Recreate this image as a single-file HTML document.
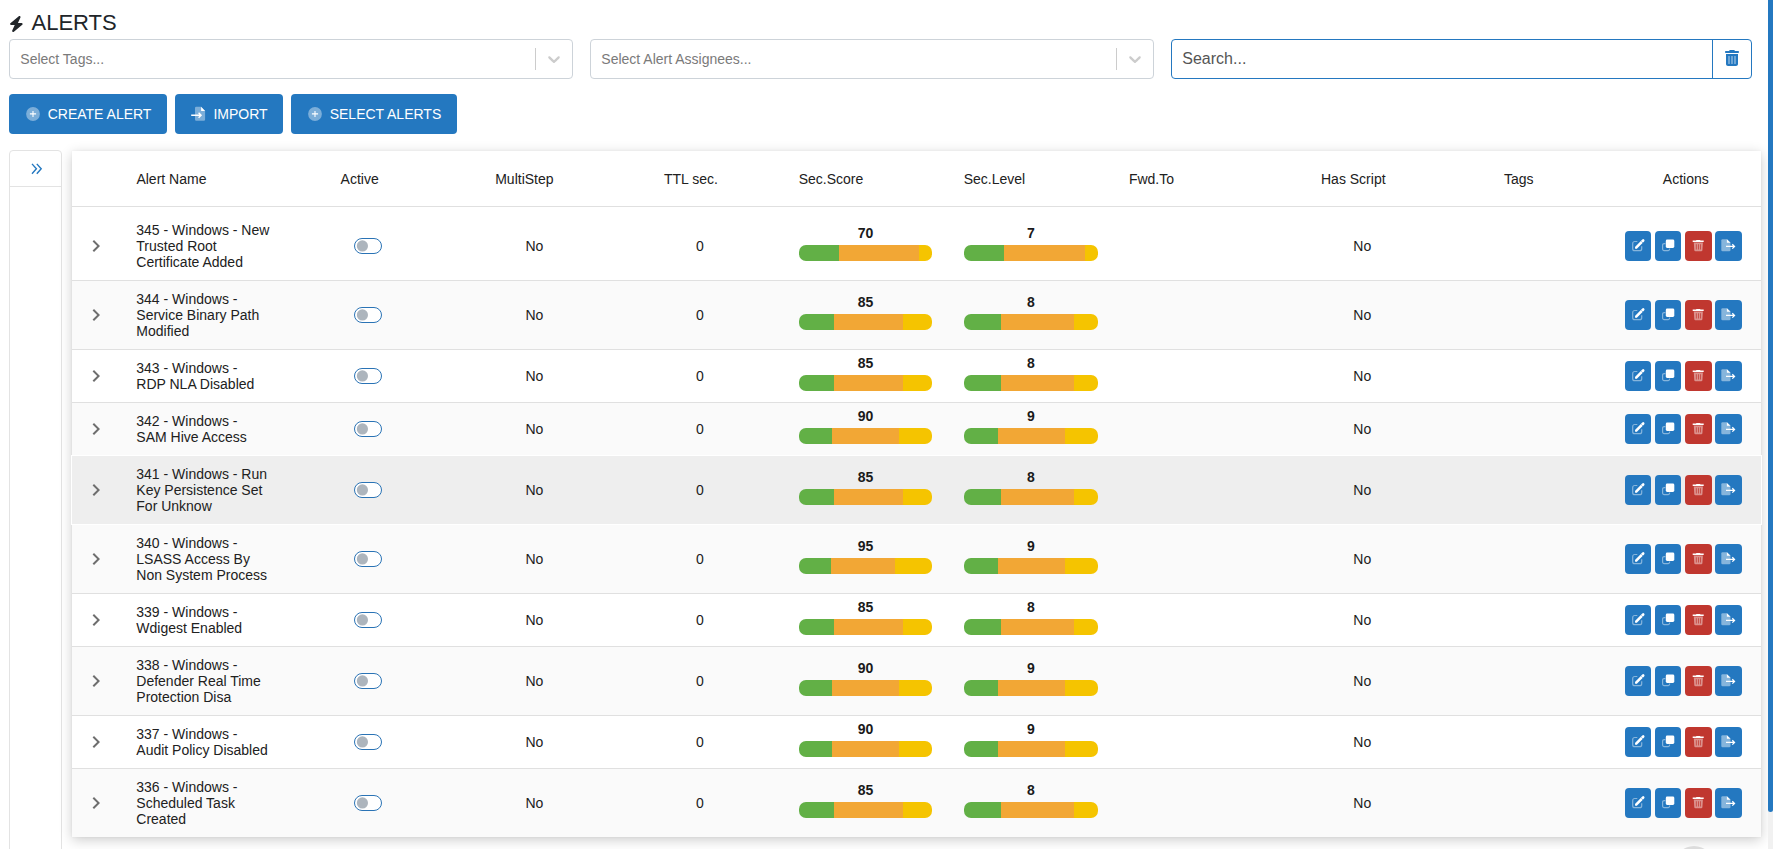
<!DOCTYPE html><html><head><meta charset="utf-8"><title>Alerts</title><style>
*{box-sizing:border-box;margin:0;padding:0}
html,body{width:1773px;height:849px;overflow:hidden;background:#fff}
body{position:relative;font-family:"Liberation Sans",sans-serif;color:#212121}
.a{position:absolute}
.t14{font-size:14px;line-height:16px;white-space:nowrap}
.sel{position:absolute;top:39px;height:40px;border:1px solid #cdd3d9;border-radius:4px;background:#fff}
.ph{position:absolute;font-size:14px;line-height:16px;color:#7a7a7a;white-space:nowrap}
.sep{position:absolute;width:1px;background:#cccccc;top:8px;height:22px}
.btn{position:absolute;top:94px;height:40px;background:#2478c0;border-radius:4px}
.btxt{position:absolute;font-size:14px;line-height:16px;color:#fff;white-space:nowrap}
.row{position:absolute;left:72px;width:1689px}
.bd{position:absolute;left:72px;width:1689px;height:1px;background:#e0e0e0}
.tog{position:absolute;left:354px;width:28px;height:16px;border:1px solid #2a73b5;border-radius:8px;background:#fff}
.tog i{position:absolute;left:1px;top:0.8px;width:12px;height:12px;border-radius:50%;background:#adb5bd}
.num{position:absolute;font-size:14px;line-height:16px;font-weight:bold;text-align:center;color:#1a1a1a}
.bar{position:absolute;height:16px;border-radius:7px;overflow:hidden;display:flex}
.g{background:#62b046} .o{background:#f2a735} .y{background:#f5c400}
.ab{position:absolute;height:30px;border-radius:4px;background:#2478c0}
.ab svg{position:absolute;left:0;top:0}
</style></head><body>
<svg class="a" style="left:9.1px;top:16px" width="14.7" height="16" viewBox="0 0 448 512" preserveAspectRatio="none"><path fill="#212529" d="M349.4 44.6c5.9-13.7 1.5-29.7-10.6-38.5s-28.6-8-39.9 1.8l-256 224c-10 8.8-13.6 22.9-8.9 35.3S50.7 288 64 288H175.5L98.6 467.4c-5.9 13.7-1.5 29.7 10.6 38.5s28.6 8 39.9-1.8l256-224c10-8.8 13.6-22.9 8.9-35.3s-16.6-20.7-30-20.7H272.5L349.4 44.6z"/></svg>
<div class="a" style="left:31.5px;top:11.58px;font-size:22px;line-height:22px;color:#212529">ALERTS</div>
<div class="sel" style="left:9px;width:564px"><div class="ph" style="left:10.3px;top:11.15px">Select Tags...</div><div class="sep" style="left:525px"></div><div class="a" style="left:526px;top:0;width:36px;height:38px"><svg class="a" style="left:8px;top:9px" width="20" height="20" viewBox="0 0 20 20"><path fill="#cccccc" d="M4.516 7.548c0.436-0.446 1.043-0.481 1.576 0l3.908 3.747 3.908-3.747c0.533-0.481 1.141-0.446 1.574 0 0.436 0.445 0.408 1.197 0 1.615-0.406 0.418-4.695 4.502-4.695 4.502-0.217 0.223-0.502 0.335-0.787 0.335s-0.57-0.112-0.789-0.335c0 0-4.287-4.084-4.695-4.502s-0.436-1.17 0-1.615z"/></svg></div></div>
<div class="sel" style="left:590px;width:564px"><div class="ph" style="left:10.3px;top:11.15px">Select Alert Assignees...</div><div class="sep" style="left:525px"></div><div class="a" style="left:526px;top:0;width:36px;height:38px"><svg class="a" style="left:8px;top:9px" width="20" height="20" viewBox="0 0 20 20"><path fill="#cccccc" d="M4.516 7.548c0.436-0.446 1.043-0.481 1.576 0l3.908 3.747 3.908-3.747c0.533-0.481 1.141-0.446 1.574 0 0.436 0.445 0.408 1.197 0 1.615-0.406 0.418-4.695 4.502-4.695 4.502-0.217 0.223-0.502 0.335-0.787 0.335s-0.57-0.112-0.789-0.335c0 0-4.287-4.084-4.695-4.502s-0.436-1.17 0-1.615z"/></svg></div></div>
<div class="sel" style="left:1171px;width:581px;border-color:#2478c0"><div class="a" style="left:10.30px;top:10.06px;font-size:16px;line-height:18px;color:#555">Search...</div><div class="a" style="left:540px;top:0;width:1px;height:38px;background:#2478c0"></div><svg class="a" style="left:553px;top:10px" width="14" height="16" viewBox="0 0 448 512"><path fill-rule="evenodd" fill="#2478c0" d="M135.2 17.7C140.6 6.8 151.7 0 163.8 0H284.2c12.1 0 23.2 6.8 28.6 17.7L320 32h96c17.7 0 32 14.3 32 32s-14.3 32-32 32H32C14.3 96 0 81.7 0 64S14.3 32 32 32h96l7.2-14.3zM32 128H416V448c0 35.3-28.7 64-64 64H96c-35.3 0-64-28.7-64-64V128zm96 64c-6 0-11 5-11 11V437c0 6 5 11 11 11s11-5 11-11V203c0-6-5-11-11-11zm96 0c-6 0-11 5-11 11V437c0 6 5 11 11 11s11-5 11-11V203c0-6-5-11-11-11zm96 0c-6 0-11 5-11 11V437c0 6 5 11 11 11s11-5 11-11V203c0-6-5-11-11-11z"/></svg></div>
<div class="btn" style="left:9px;width:158px"></div>
<svg class="a" style="left:25.6px;top:106.9px" width="14" height="14" viewBox="0 0 14 14"><circle cx="7" cy="7" r="6.9" fill="#fff" opacity="0.4"/><path fill="none" stroke="#fff" stroke-width="1.1" d="M7 3.9V10.1M3.9 6.9H10.1"/></svg>
<div class="btxt" style="left:47.7px;top:105.95px">CREATE ALERT</div>
<div class="btn" style="left:175px;width:108px"></div>
<svg class="a" style="left:180px;top:100px" width="30" height="28" viewBox="180 100 30 28"><path fill="#fff" opacity="0.4" d="M196.3 106.8H201.1L205.1 110.9V119.5A1.3 1.3 0 0 1 203.8 120.8H196.3A1.3 1.3 0 0 1 195 119.5V108.1A1.3 1.3 0 0 1 196.3 106.8Z"/><path fill="#fff" d="M201.1 106.8L205.1 110.9H201.1Z"/><path fill="none" stroke="#fff" stroke-width="1.4" d="M191.2 115.3H201M198.6 112.8L201.1 115.3L198.6 117.8"/></svg>
<div class="btxt" style="left:213.4px;top:105.95px">IMPORT</div>
<div class="btn" style="left:291px;width:166px"></div>
<svg class="a" style="left:307.6px;top:106.9px" width="14" height="14" viewBox="0 0 14 14"><circle cx="7" cy="7" r="6.9" fill="#fff" opacity="0.4"/><path fill="none" stroke="#fff" stroke-width="1.1" d="M7 3.9V10.1M3.9 6.9H10.1"/></svg>
<div class="btxt" style="left:329.7px;top:105.95px">SELECT ALERTS</div>
<div class="a" style="left:9px;top:150px;width:53px;height:720px;border:1px solid #e3e3e3;border-radius:4px;background:#fff"></div>
<div class="a" style="left:10px;top:186px;width:51px;height:1px;background:#e3e3e3"></div>
<svg class="a" style="left:30px;top:162px" width="14" height="14" viewBox="0 0 14 14"><path d="M2 1.9 L6.4 6.8 L2 11.7 M6.8 1.9 L11.2 6.8 L6.8 11.7" fill="none" stroke="#2478c0" stroke-width="1.4"/></svg>
<div class="a" style="left:72px;top:151px;width:1689px;height:686px;background:#fff;box-shadow:0 3px 12px rgba(0,0,0,0.2),0 0 2px rgba(0,0,0,0.06)"></div>
<div class="a t14" style="left:136.4px;top:171.15px">Alert Name</div>
<div class="a t14" style="left:340.6px;top:171.15px">Active</div>
<div class="a t14" style="left:495.2px;top:171.15px">MultiStep</div>
<div class="a t14" style="left:664px;top:171.15px">TTL sec.</div>
<div class="a t14" style="left:798.7px;top:171.15px">Sec.Score</div>
<div class="a t14" style="left:963.7px;top:171.15px">Sec.Level</div>
<div class="a t14" style="left:1128.9px;top:171.15px">Fwd.To</div>
<div class="a t14" style="left:1321.0px;top:171.15px">Has Script</div>
<div class="a t14" style="left:1504px;top:171.15px">Tags</div>
<div class="a t14" style="left:1662.8px;top:171.15px">Actions</div>
<div class="bd" style="top:206px"></div>
<div class="row" style="top:207px;height:73px;background:#ffffff"></div>
<svg class="a" style="left:84.3px;top:233.70px" width="24" height="24" viewBox="0 0 24 24"><path fill="#6e6e6e" d="M8.59 16.59 13.17 12 8.59 7.41 10 6l6 6-6 6z"/></svg>
<div class="a t14" style="left:136.3px;top:222.00px">345 - Windows - New<br>Trusted Root<br>Certificate Added</div>
<svg class="a" style="left:354px;top:238.00px" width="28" height="16" viewBox="0 0 28 16"><rect x="0.5" y="0.5" width="27" height="15" rx="7.5" fill="#fff" stroke="#2a73b5" stroke-width="1"/><circle cx="8.4" cy="7.95" r="5.6" fill="#adb5bd"/></svg>
<div class="a t14" style="left:525.4px;top:238.00px">No</div>
<div class="a t14" style="left:695.9px;top:238.00px">0</div>
<div class="a t14" style="left:1353.3px;top:238.00px">No</div>
<div class="num" style="left:799px;width:133px;top:224.50px">70</div>
<div class="bar" style="left:799px;width:133px;top:245.00px"><div class="g" style="flex:30"></div><div class="o" style="flex:60"></div><div class="y" style="flex:10"></div></div>
<div class="num" style="left:964px;width:134px;top:224.50px">7</div>
<div class="bar" style="left:964px;width:134px;top:245.00px"><div class="g" style="flex:3"></div><div class="o" style="flex:6"></div><div class="y" style="flex:1"></div></div>
<div class="ab" style="left:1625px;width:26px;top:231.00px"><svg width="26" height="30" viewBox="0 0 26 30"><path d="M12.3 10.5 H9.7 A2 2 0 0 0 7.7 12.5 V17.7 A2 2 0 0 0 9.7 19.7 H14.7 A2 2 0 0 0 16.7 17.7 V15.3" fill="none" stroke="#fff" stroke-opacity="0.45" stroke-width="1.2"/><path d="M11.4 16.3 L18.2 9.5" stroke="#fff" stroke-width="2.6" stroke-linecap="round"/><path d="M10.5 15.4 L12.3 17.2 L10 17.7 Z" fill="#fff"/><path d="M16.3 10.3 L18.3 12.3" stroke="#2478c0" stroke-width="0.5"/></svg></div>
<div class="ab" style="left:1655px;width:26px;top:231.00px"><svg width="26" height="30" viewBox="0 0 26 30"><path d="M10.4 12.6 H9.1 A1.5 1.5 0 0 0 7.6 14.1 V18.1 A1.5 1.5 0 0 0 9.1 19.6 H13.1 A1.5 1.5 0 0 0 14.6 18.1 V17.4" fill="none" stroke="#fff" stroke-opacity="0.45" stroke-width="1.2"/><rect x="10.8" y="8.5" width="8.5" height="8.4" rx="1.4" fill="#fff"/></svg></div>
<div class="ab" style="left:1685px;width:27px;top:231.00px;background:#c0372f"><svg width="27" height="30" viewBox="0 0 27 30"><path d="M7.7 9.6 H10.9 L11.5 9 H15 L15.6 9.6 H18.7 V11.1 H7.7 Z" fill="#fff"/><path fill-rule="evenodd" d="M8.8 11.6 H17.9 L17.4 19.2 A1.2 1.2 0 0 1 16.2 20.3 H10.5 A1.2 1.2 0 0 1 9.3 19.2 Z M10.9 13.2 V18.6 H11.6 V13.2 Z M13 13.2 V18.6 H13.7 V13.2 Z M15.1 13.2 V18.6 H15.8 V13.2 Z" fill="#fff" fill-opacity="0.45"/></svg></div>
<div class="ab" style="left:1715px;width:27px;top:231.00px"><svg width="27" height="30" viewBox="0 0 27 30"><path d="M7.6 8.2 H11.9 L15.5 11.8 V19 A1.3 1.3 0 0 1 14.2 20.3 H7.6 A1.3 1.3 0 0 1 6.3 19 V9.5 A1.3 1.3 0 0 1 7.6 8.2 Z" fill="#fff" fill-opacity="0.45"/><path d="M11.9 8.2 L15.5 11.8 H11.9 Z" fill="#fff"/><path d="M11 15.45 H19.3 M17.3 13.3 L19.5 15.45 L17.3 17.6" fill="none" stroke="#fff" stroke-width="1.3"/></svg></div>
<div class="row" style="top:281px;height:68px;background:#fafafa"></div>
<svg class="a" style="left:84.3px;top:302.70px" width="24" height="24" viewBox="0 0 24 24"><path fill="#6e6e6e" d="M8.59 16.59 13.17 12 8.59 7.41 10 6l6 6-6 6z"/></svg>
<div class="a t14" style="left:136.3px;top:291.00px">344 - Windows -<br>Service Binary Path<br>Modified</div>
<svg class="a" style="left:354px;top:307.00px" width="28" height="16" viewBox="0 0 28 16"><rect x="0.5" y="0.5" width="27" height="15" rx="7.5" fill="#fff" stroke="#2a73b5" stroke-width="1"/><circle cx="8.4" cy="7.95" r="5.6" fill="#adb5bd"/></svg>
<div class="a t14" style="left:525.4px;top:307.00px">No</div>
<div class="a t14" style="left:695.9px;top:307.00px">0</div>
<div class="a t14" style="left:1353.3px;top:307.00px">No</div>
<div class="num" style="left:799px;width:133px;top:293.50px">85</div>
<div class="bar" style="left:799px;width:133px;top:314.00px"><div class="g" style="flex:30"></div><div class="o" style="flex:60"></div><div class="y" style="flex:25"></div></div>
<div class="num" style="left:964px;width:134px;top:293.50px">8</div>
<div class="bar" style="left:964px;width:134px;top:314.00px"><div class="g" style="flex:3"></div><div class="o" style="flex:6"></div><div class="y" style="flex:2"></div></div>
<div class="ab" style="left:1625px;width:26px;top:300.00px"><svg width="26" height="30" viewBox="0 0 26 30"><path d="M12.3 10.5 H9.7 A2 2 0 0 0 7.7 12.5 V17.7 A2 2 0 0 0 9.7 19.7 H14.7 A2 2 0 0 0 16.7 17.7 V15.3" fill="none" stroke="#fff" stroke-opacity="0.45" stroke-width="1.2"/><path d="M11.4 16.3 L18.2 9.5" stroke="#fff" stroke-width="2.6" stroke-linecap="round"/><path d="M10.5 15.4 L12.3 17.2 L10 17.7 Z" fill="#fff"/><path d="M16.3 10.3 L18.3 12.3" stroke="#2478c0" stroke-width="0.5"/></svg></div>
<div class="ab" style="left:1655px;width:26px;top:300.00px"><svg width="26" height="30" viewBox="0 0 26 30"><path d="M10.4 12.6 H9.1 A1.5 1.5 0 0 0 7.6 14.1 V18.1 A1.5 1.5 0 0 0 9.1 19.6 H13.1 A1.5 1.5 0 0 0 14.6 18.1 V17.4" fill="none" stroke="#fff" stroke-opacity="0.45" stroke-width="1.2"/><rect x="10.8" y="8.5" width="8.5" height="8.4" rx="1.4" fill="#fff"/></svg></div>
<div class="ab" style="left:1685px;width:27px;top:300.00px;background:#c0372f"><svg width="27" height="30" viewBox="0 0 27 30"><path d="M7.7 9.6 H10.9 L11.5 9 H15 L15.6 9.6 H18.7 V11.1 H7.7 Z" fill="#fff"/><path fill-rule="evenodd" d="M8.8 11.6 H17.9 L17.4 19.2 A1.2 1.2 0 0 1 16.2 20.3 H10.5 A1.2 1.2 0 0 1 9.3 19.2 Z M10.9 13.2 V18.6 H11.6 V13.2 Z M13 13.2 V18.6 H13.7 V13.2 Z M15.1 13.2 V18.6 H15.8 V13.2 Z" fill="#fff" fill-opacity="0.45"/></svg></div>
<div class="ab" style="left:1715px;width:27px;top:300.00px"><svg width="27" height="30" viewBox="0 0 27 30"><path d="M7.6 8.2 H11.9 L15.5 11.8 V19 A1.3 1.3 0 0 1 14.2 20.3 H7.6 A1.3 1.3 0 0 1 6.3 19 V9.5 A1.3 1.3 0 0 1 7.6 8.2 Z" fill="#fff" fill-opacity="0.45"/><path d="M11.9 8.2 L15.5 11.8 H11.9 Z" fill="#fff"/><path d="M11 15.45 H19.3 M17.3 13.3 L19.5 15.45 L17.3 17.6" fill="none" stroke="#fff" stroke-width="1.3"/></svg></div>
<div class="row" style="top:350px;height:52px;background:#ffffff"></div>
<svg class="a" style="left:84.3px;top:363.70px" width="24" height="24" viewBox="0 0 24 24"><path fill="#6e6e6e" d="M8.59 16.59 13.17 12 8.59 7.41 10 6l6 6-6 6z"/></svg>
<div class="a t14" style="left:136.3px;top:360.00px">343 - Windows -<br>RDP NLA Disabled</div>
<svg class="a" style="left:354px;top:368.00px" width="28" height="16" viewBox="0 0 28 16"><rect x="0.5" y="0.5" width="27" height="15" rx="7.5" fill="#fff" stroke="#2a73b5" stroke-width="1"/><circle cx="8.4" cy="7.95" r="5.6" fill="#adb5bd"/></svg>
<div class="a t14" style="left:525.4px;top:368.00px">No</div>
<div class="a t14" style="left:695.9px;top:368.00px">0</div>
<div class="a t14" style="left:1353.3px;top:368.00px">No</div>
<div class="num" style="left:799px;width:133px;top:354.50px">85</div>
<div class="bar" style="left:799px;width:133px;top:375.00px"><div class="g" style="flex:30"></div><div class="o" style="flex:60"></div><div class="y" style="flex:25"></div></div>
<div class="num" style="left:964px;width:134px;top:354.50px">8</div>
<div class="bar" style="left:964px;width:134px;top:375.00px"><div class="g" style="flex:3"></div><div class="o" style="flex:6"></div><div class="y" style="flex:2"></div></div>
<div class="ab" style="left:1625px;width:26px;top:361.00px"><svg width="26" height="30" viewBox="0 0 26 30"><path d="M12.3 10.5 H9.7 A2 2 0 0 0 7.7 12.5 V17.7 A2 2 0 0 0 9.7 19.7 H14.7 A2 2 0 0 0 16.7 17.7 V15.3" fill="none" stroke="#fff" stroke-opacity="0.45" stroke-width="1.2"/><path d="M11.4 16.3 L18.2 9.5" stroke="#fff" stroke-width="2.6" stroke-linecap="round"/><path d="M10.5 15.4 L12.3 17.2 L10 17.7 Z" fill="#fff"/><path d="M16.3 10.3 L18.3 12.3" stroke="#2478c0" stroke-width="0.5"/></svg></div>
<div class="ab" style="left:1655px;width:26px;top:361.00px"><svg width="26" height="30" viewBox="0 0 26 30"><path d="M10.4 12.6 H9.1 A1.5 1.5 0 0 0 7.6 14.1 V18.1 A1.5 1.5 0 0 0 9.1 19.6 H13.1 A1.5 1.5 0 0 0 14.6 18.1 V17.4" fill="none" stroke="#fff" stroke-opacity="0.45" stroke-width="1.2"/><rect x="10.8" y="8.5" width="8.5" height="8.4" rx="1.4" fill="#fff"/></svg></div>
<div class="ab" style="left:1685px;width:27px;top:361.00px;background:#c0372f"><svg width="27" height="30" viewBox="0 0 27 30"><path d="M7.7 9.6 H10.9 L11.5 9 H15 L15.6 9.6 H18.7 V11.1 H7.7 Z" fill="#fff"/><path fill-rule="evenodd" d="M8.8 11.6 H17.9 L17.4 19.2 A1.2 1.2 0 0 1 16.2 20.3 H10.5 A1.2 1.2 0 0 1 9.3 19.2 Z M10.9 13.2 V18.6 H11.6 V13.2 Z M13 13.2 V18.6 H13.7 V13.2 Z M15.1 13.2 V18.6 H15.8 V13.2 Z" fill="#fff" fill-opacity="0.45"/></svg></div>
<div class="ab" style="left:1715px;width:27px;top:361.00px"><svg width="27" height="30" viewBox="0 0 27 30"><path d="M7.6 8.2 H11.9 L15.5 11.8 V19 A1.3 1.3 0 0 1 14.2 20.3 H7.6 A1.3 1.3 0 0 1 6.3 19 V9.5 A1.3 1.3 0 0 1 7.6 8.2 Z" fill="#fff" fill-opacity="0.45"/><path d="M11.9 8.2 L15.5 11.8 H11.9 Z" fill="#fff"/><path d="M11 15.45 H19.3 M17.3 13.3 L19.5 15.45 L17.3 17.6" fill="none" stroke="#fff" stroke-width="1.3"/></svg></div>
<div class="row" style="top:403px;height:52px;background:#fafafa"></div>
<svg class="a" style="left:84.3px;top:416.70px" width="24" height="24" viewBox="0 0 24 24"><path fill="#6e6e6e" d="M8.59 16.59 13.17 12 8.59 7.41 10 6l6 6-6 6z"/></svg>
<div class="a t14" style="left:136.3px;top:413.00px">342 - Windows -<br>SAM Hive Access</div>
<svg class="a" style="left:354px;top:421.00px" width="28" height="16" viewBox="0 0 28 16"><rect x="0.5" y="0.5" width="27" height="15" rx="7.5" fill="#fff" stroke="#2a73b5" stroke-width="1"/><circle cx="8.4" cy="7.95" r="5.6" fill="#adb5bd"/></svg>
<div class="a t14" style="left:525.4px;top:421.00px">No</div>
<div class="a t14" style="left:695.9px;top:421.00px">0</div>
<div class="a t14" style="left:1353.3px;top:421.00px">No</div>
<div class="num" style="left:799px;width:133px;top:407.50px">90</div>
<div class="bar" style="left:799px;width:133px;top:428.00px"><div class="g" style="flex:30"></div><div class="o" style="flex:60"></div><div class="y" style="flex:30"></div></div>
<div class="num" style="left:964px;width:134px;top:407.50px">9</div>
<div class="bar" style="left:964px;width:134px;top:428.00px"><div class="g" style="flex:3"></div><div class="o" style="flex:6"></div><div class="y" style="flex:3"></div></div>
<div class="ab" style="left:1625px;width:26px;top:414.00px"><svg width="26" height="30" viewBox="0 0 26 30"><path d="M12.3 10.5 H9.7 A2 2 0 0 0 7.7 12.5 V17.7 A2 2 0 0 0 9.7 19.7 H14.7 A2 2 0 0 0 16.7 17.7 V15.3" fill="none" stroke="#fff" stroke-opacity="0.45" stroke-width="1.2"/><path d="M11.4 16.3 L18.2 9.5" stroke="#fff" stroke-width="2.6" stroke-linecap="round"/><path d="M10.5 15.4 L12.3 17.2 L10 17.7 Z" fill="#fff"/><path d="M16.3 10.3 L18.3 12.3" stroke="#2478c0" stroke-width="0.5"/></svg></div>
<div class="ab" style="left:1655px;width:26px;top:414.00px"><svg width="26" height="30" viewBox="0 0 26 30"><path d="M10.4 12.6 H9.1 A1.5 1.5 0 0 0 7.6 14.1 V18.1 A1.5 1.5 0 0 0 9.1 19.6 H13.1 A1.5 1.5 0 0 0 14.6 18.1 V17.4" fill="none" stroke="#fff" stroke-opacity="0.45" stroke-width="1.2"/><rect x="10.8" y="8.5" width="8.5" height="8.4" rx="1.4" fill="#fff"/></svg></div>
<div class="ab" style="left:1685px;width:27px;top:414.00px;background:#c0372f"><svg width="27" height="30" viewBox="0 0 27 30"><path d="M7.7 9.6 H10.9 L11.5 9 H15 L15.6 9.6 H18.7 V11.1 H7.7 Z" fill="#fff"/><path fill-rule="evenodd" d="M8.8 11.6 H17.9 L17.4 19.2 A1.2 1.2 0 0 1 16.2 20.3 H10.5 A1.2 1.2 0 0 1 9.3 19.2 Z M10.9 13.2 V18.6 H11.6 V13.2 Z M13 13.2 V18.6 H13.7 V13.2 Z M15.1 13.2 V18.6 H15.8 V13.2 Z" fill="#fff" fill-opacity="0.45"/></svg></div>
<div class="ab" style="left:1715px;width:27px;top:414.00px"><svg width="27" height="30" viewBox="0 0 27 30"><path d="M7.6 8.2 H11.9 L15.5 11.8 V19 A1.3 1.3 0 0 1 14.2 20.3 H7.6 A1.3 1.3 0 0 1 6.3 19 V9.5 A1.3 1.3 0 0 1 7.6 8.2 Z" fill="#fff" fill-opacity="0.45"/><path d="M11.9 8.2 L15.5 11.8 H11.9 Z" fill="#fff"/><path d="M11 15.45 H19.3 M17.3 13.3 L19.5 15.45 L17.3 17.6" fill="none" stroke="#fff" stroke-width="1.3"/></svg></div>
<div class="a" style="left:71px;top:455px;width:1691px;height:70px;background:#fff"></div>
<div class="row" style="top:456px;height:68px;background:#eeeeee"></div>
<svg class="a" style="left:84.3px;top:477.70px" width="24" height="24" viewBox="0 0 24 24"><path fill="#6e6e6e" d="M8.59 16.59 13.17 12 8.59 7.41 10 6l6 6-6 6z"/></svg>
<div class="a t14" style="left:136.3px;top:466.00px">341 - Windows - Run<br>Key Persistence Set<br>For Unknow</div>
<svg class="a" style="left:354px;top:482.00px" width="28" height="16" viewBox="0 0 28 16"><rect x="0.5" y="0.5" width="27" height="15" rx="7.5" fill="#fff" stroke="#2a73b5" stroke-width="1"/><circle cx="8.4" cy="7.95" r="5.6" fill="#adb5bd"/></svg>
<div class="a t14" style="left:525.4px;top:482.00px">No</div>
<div class="a t14" style="left:695.9px;top:482.00px">0</div>
<div class="a t14" style="left:1353.3px;top:482.00px">No</div>
<div class="num" style="left:799px;width:133px;top:468.50px">85</div>
<div class="bar" style="left:799px;width:133px;top:489.00px"><div class="g" style="flex:30"></div><div class="o" style="flex:60"></div><div class="y" style="flex:25"></div></div>
<div class="num" style="left:964px;width:134px;top:468.50px">8</div>
<div class="bar" style="left:964px;width:134px;top:489.00px"><div class="g" style="flex:3"></div><div class="o" style="flex:6"></div><div class="y" style="flex:2"></div></div>
<div class="ab" style="left:1625px;width:26px;top:475.00px"><svg width="26" height="30" viewBox="0 0 26 30"><path d="M12.3 10.5 H9.7 A2 2 0 0 0 7.7 12.5 V17.7 A2 2 0 0 0 9.7 19.7 H14.7 A2 2 0 0 0 16.7 17.7 V15.3" fill="none" stroke="#fff" stroke-opacity="0.45" stroke-width="1.2"/><path d="M11.4 16.3 L18.2 9.5" stroke="#fff" stroke-width="2.6" stroke-linecap="round"/><path d="M10.5 15.4 L12.3 17.2 L10 17.7 Z" fill="#fff"/><path d="M16.3 10.3 L18.3 12.3" stroke="#2478c0" stroke-width="0.5"/></svg></div>
<div class="ab" style="left:1655px;width:26px;top:475.00px"><svg width="26" height="30" viewBox="0 0 26 30"><path d="M10.4 12.6 H9.1 A1.5 1.5 0 0 0 7.6 14.1 V18.1 A1.5 1.5 0 0 0 9.1 19.6 H13.1 A1.5 1.5 0 0 0 14.6 18.1 V17.4" fill="none" stroke="#fff" stroke-opacity="0.45" stroke-width="1.2"/><rect x="10.8" y="8.5" width="8.5" height="8.4" rx="1.4" fill="#fff"/></svg></div>
<div class="ab" style="left:1685px;width:27px;top:475.00px;background:#c0372f"><svg width="27" height="30" viewBox="0 0 27 30"><path d="M7.7 9.6 H10.9 L11.5 9 H15 L15.6 9.6 H18.7 V11.1 H7.7 Z" fill="#fff"/><path fill-rule="evenodd" d="M8.8 11.6 H17.9 L17.4 19.2 A1.2 1.2 0 0 1 16.2 20.3 H10.5 A1.2 1.2 0 0 1 9.3 19.2 Z M10.9 13.2 V18.6 H11.6 V13.2 Z M13 13.2 V18.6 H13.7 V13.2 Z M15.1 13.2 V18.6 H15.8 V13.2 Z" fill="#fff" fill-opacity="0.45"/></svg></div>
<div class="ab" style="left:1715px;width:27px;top:475.00px"><svg width="27" height="30" viewBox="0 0 27 30"><path d="M7.6 8.2 H11.9 L15.5 11.8 V19 A1.3 1.3 0 0 1 14.2 20.3 H7.6 A1.3 1.3 0 0 1 6.3 19 V9.5 A1.3 1.3 0 0 1 7.6 8.2 Z" fill="#fff" fill-opacity="0.45"/><path d="M11.9 8.2 L15.5 11.8 H11.9 Z" fill="#fff"/><path d="M11 15.45 H19.3 M17.3 13.3 L19.5 15.45 L17.3 17.6" fill="none" stroke="#fff" stroke-width="1.3"/></svg></div>
<div class="row" style="top:525px;height:68px;background:#fafafa"></div>
<svg class="a" style="left:84.3px;top:546.70px" width="24" height="24" viewBox="0 0 24 24"><path fill="#6e6e6e" d="M8.59 16.59 13.17 12 8.59 7.41 10 6l6 6-6 6z"/></svg>
<div class="a t14" style="left:136.3px;top:535.00px">340 - Windows -<br>LSASS Access By<br>Non System Process</div>
<svg class="a" style="left:354px;top:551.00px" width="28" height="16" viewBox="0 0 28 16"><rect x="0.5" y="0.5" width="27" height="15" rx="7.5" fill="#fff" stroke="#2a73b5" stroke-width="1"/><circle cx="8.4" cy="7.95" r="5.6" fill="#adb5bd"/></svg>
<div class="a t14" style="left:525.4px;top:551.00px">No</div>
<div class="a t14" style="left:695.9px;top:551.00px">0</div>
<div class="a t14" style="left:1353.3px;top:551.00px">No</div>
<div class="num" style="left:799px;width:133px;top:537.50px">95</div>
<div class="bar" style="left:799px;width:133px;top:558.00px"><div class="g" style="flex:30"></div><div class="o" style="flex:60"></div><div class="y" style="flex:35"></div></div>
<div class="num" style="left:964px;width:134px;top:537.50px">9</div>
<div class="bar" style="left:964px;width:134px;top:558.00px"><div class="g" style="flex:3"></div><div class="o" style="flex:6"></div><div class="y" style="flex:3"></div></div>
<div class="ab" style="left:1625px;width:26px;top:544.00px"><svg width="26" height="30" viewBox="0 0 26 30"><path d="M12.3 10.5 H9.7 A2 2 0 0 0 7.7 12.5 V17.7 A2 2 0 0 0 9.7 19.7 H14.7 A2 2 0 0 0 16.7 17.7 V15.3" fill="none" stroke="#fff" stroke-opacity="0.45" stroke-width="1.2"/><path d="M11.4 16.3 L18.2 9.5" stroke="#fff" stroke-width="2.6" stroke-linecap="round"/><path d="M10.5 15.4 L12.3 17.2 L10 17.7 Z" fill="#fff"/><path d="M16.3 10.3 L18.3 12.3" stroke="#2478c0" stroke-width="0.5"/></svg></div>
<div class="ab" style="left:1655px;width:26px;top:544.00px"><svg width="26" height="30" viewBox="0 0 26 30"><path d="M10.4 12.6 H9.1 A1.5 1.5 0 0 0 7.6 14.1 V18.1 A1.5 1.5 0 0 0 9.1 19.6 H13.1 A1.5 1.5 0 0 0 14.6 18.1 V17.4" fill="none" stroke="#fff" stroke-opacity="0.45" stroke-width="1.2"/><rect x="10.8" y="8.5" width="8.5" height="8.4" rx="1.4" fill="#fff"/></svg></div>
<div class="ab" style="left:1685px;width:27px;top:544.00px;background:#c0372f"><svg width="27" height="30" viewBox="0 0 27 30"><path d="M7.7 9.6 H10.9 L11.5 9 H15 L15.6 9.6 H18.7 V11.1 H7.7 Z" fill="#fff"/><path fill-rule="evenodd" d="M8.8 11.6 H17.9 L17.4 19.2 A1.2 1.2 0 0 1 16.2 20.3 H10.5 A1.2 1.2 0 0 1 9.3 19.2 Z M10.9 13.2 V18.6 H11.6 V13.2 Z M13 13.2 V18.6 H13.7 V13.2 Z M15.1 13.2 V18.6 H15.8 V13.2 Z" fill="#fff" fill-opacity="0.45"/></svg></div>
<div class="ab" style="left:1715px;width:27px;top:544.00px"><svg width="27" height="30" viewBox="0 0 27 30"><path d="M7.6 8.2 H11.9 L15.5 11.8 V19 A1.3 1.3 0 0 1 14.2 20.3 H7.6 A1.3 1.3 0 0 1 6.3 19 V9.5 A1.3 1.3 0 0 1 7.6 8.2 Z" fill="#fff" fill-opacity="0.45"/><path d="M11.9 8.2 L15.5 11.8 H11.9 Z" fill="#fff"/><path d="M11 15.45 H19.3 M17.3 13.3 L19.5 15.45 L17.3 17.6" fill="none" stroke="#fff" stroke-width="1.3"/></svg></div>
<div class="row" style="top:594px;height:52px;background:#ffffff"></div>
<svg class="a" style="left:84.3px;top:607.70px" width="24" height="24" viewBox="0 0 24 24"><path fill="#6e6e6e" d="M8.59 16.59 13.17 12 8.59 7.41 10 6l6 6-6 6z"/></svg>
<div class="a t14" style="left:136.3px;top:604.00px">339 - Windows -<br>Wdigest Enabled</div>
<svg class="a" style="left:354px;top:612.00px" width="28" height="16" viewBox="0 0 28 16"><rect x="0.5" y="0.5" width="27" height="15" rx="7.5" fill="#fff" stroke="#2a73b5" stroke-width="1"/><circle cx="8.4" cy="7.95" r="5.6" fill="#adb5bd"/></svg>
<div class="a t14" style="left:525.4px;top:612.00px">No</div>
<div class="a t14" style="left:695.9px;top:612.00px">0</div>
<div class="a t14" style="left:1353.3px;top:612.00px">No</div>
<div class="num" style="left:799px;width:133px;top:598.50px">85</div>
<div class="bar" style="left:799px;width:133px;top:619.00px"><div class="g" style="flex:30"></div><div class="o" style="flex:60"></div><div class="y" style="flex:25"></div></div>
<div class="num" style="left:964px;width:134px;top:598.50px">8</div>
<div class="bar" style="left:964px;width:134px;top:619.00px"><div class="g" style="flex:3"></div><div class="o" style="flex:6"></div><div class="y" style="flex:2"></div></div>
<div class="ab" style="left:1625px;width:26px;top:605.00px"><svg width="26" height="30" viewBox="0 0 26 30"><path d="M12.3 10.5 H9.7 A2 2 0 0 0 7.7 12.5 V17.7 A2 2 0 0 0 9.7 19.7 H14.7 A2 2 0 0 0 16.7 17.7 V15.3" fill="none" stroke="#fff" stroke-opacity="0.45" stroke-width="1.2"/><path d="M11.4 16.3 L18.2 9.5" stroke="#fff" stroke-width="2.6" stroke-linecap="round"/><path d="M10.5 15.4 L12.3 17.2 L10 17.7 Z" fill="#fff"/><path d="M16.3 10.3 L18.3 12.3" stroke="#2478c0" stroke-width="0.5"/></svg></div>
<div class="ab" style="left:1655px;width:26px;top:605.00px"><svg width="26" height="30" viewBox="0 0 26 30"><path d="M10.4 12.6 H9.1 A1.5 1.5 0 0 0 7.6 14.1 V18.1 A1.5 1.5 0 0 0 9.1 19.6 H13.1 A1.5 1.5 0 0 0 14.6 18.1 V17.4" fill="none" stroke="#fff" stroke-opacity="0.45" stroke-width="1.2"/><rect x="10.8" y="8.5" width="8.5" height="8.4" rx="1.4" fill="#fff"/></svg></div>
<div class="ab" style="left:1685px;width:27px;top:605.00px;background:#c0372f"><svg width="27" height="30" viewBox="0 0 27 30"><path d="M7.7 9.6 H10.9 L11.5 9 H15 L15.6 9.6 H18.7 V11.1 H7.7 Z" fill="#fff"/><path fill-rule="evenodd" d="M8.8 11.6 H17.9 L17.4 19.2 A1.2 1.2 0 0 1 16.2 20.3 H10.5 A1.2 1.2 0 0 1 9.3 19.2 Z M10.9 13.2 V18.6 H11.6 V13.2 Z M13 13.2 V18.6 H13.7 V13.2 Z M15.1 13.2 V18.6 H15.8 V13.2 Z" fill="#fff" fill-opacity="0.45"/></svg></div>
<div class="ab" style="left:1715px;width:27px;top:605.00px"><svg width="27" height="30" viewBox="0 0 27 30"><path d="M7.6 8.2 H11.9 L15.5 11.8 V19 A1.3 1.3 0 0 1 14.2 20.3 H7.6 A1.3 1.3 0 0 1 6.3 19 V9.5 A1.3 1.3 0 0 1 7.6 8.2 Z" fill="#fff" fill-opacity="0.45"/><path d="M11.9 8.2 L15.5 11.8 H11.9 Z" fill="#fff"/><path d="M11 15.45 H19.3 M17.3 13.3 L19.5 15.45 L17.3 17.6" fill="none" stroke="#fff" stroke-width="1.3"/></svg></div>
<div class="row" style="top:647px;height:68px;background:#fafafa"></div>
<svg class="a" style="left:84.3px;top:668.70px" width="24" height="24" viewBox="0 0 24 24"><path fill="#6e6e6e" d="M8.59 16.59 13.17 12 8.59 7.41 10 6l6 6-6 6z"/></svg>
<div class="a t14" style="left:136.3px;top:657.00px">338 - Windows -<br>Defender Real Time<br>Protection Disa</div>
<svg class="a" style="left:354px;top:673.00px" width="28" height="16" viewBox="0 0 28 16"><rect x="0.5" y="0.5" width="27" height="15" rx="7.5" fill="#fff" stroke="#2a73b5" stroke-width="1"/><circle cx="8.4" cy="7.95" r="5.6" fill="#adb5bd"/></svg>
<div class="a t14" style="left:525.4px;top:673.00px">No</div>
<div class="a t14" style="left:695.9px;top:673.00px">0</div>
<div class="a t14" style="left:1353.3px;top:673.00px">No</div>
<div class="num" style="left:799px;width:133px;top:659.50px">90</div>
<div class="bar" style="left:799px;width:133px;top:680.00px"><div class="g" style="flex:30"></div><div class="o" style="flex:60"></div><div class="y" style="flex:30"></div></div>
<div class="num" style="left:964px;width:134px;top:659.50px">9</div>
<div class="bar" style="left:964px;width:134px;top:680.00px"><div class="g" style="flex:3"></div><div class="o" style="flex:6"></div><div class="y" style="flex:3"></div></div>
<div class="ab" style="left:1625px;width:26px;top:666.00px"><svg width="26" height="30" viewBox="0 0 26 30"><path d="M12.3 10.5 H9.7 A2 2 0 0 0 7.7 12.5 V17.7 A2 2 0 0 0 9.7 19.7 H14.7 A2 2 0 0 0 16.7 17.7 V15.3" fill="none" stroke="#fff" stroke-opacity="0.45" stroke-width="1.2"/><path d="M11.4 16.3 L18.2 9.5" stroke="#fff" stroke-width="2.6" stroke-linecap="round"/><path d="M10.5 15.4 L12.3 17.2 L10 17.7 Z" fill="#fff"/><path d="M16.3 10.3 L18.3 12.3" stroke="#2478c0" stroke-width="0.5"/></svg></div>
<div class="ab" style="left:1655px;width:26px;top:666.00px"><svg width="26" height="30" viewBox="0 0 26 30"><path d="M10.4 12.6 H9.1 A1.5 1.5 0 0 0 7.6 14.1 V18.1 A1.5 1.5 0 0 0 9.1 19.6 H13.1 A1.5 1.5 0 0 0 14.6 18.1 V17.4" fill="none" stroke="#fff" stroke-opacity="0.45" stroke-width="1.2"/><rect x="10.8" y="8.5" width="8.5" height="8.4" rx="1.4" fill="#fff"/></svg></div>
<div class="ab" style="left:1685px;width:27px;top:666.00px;background:#c0372f"><svg width="27" height="30" viewBox="0 0 27 30"><path d="M7.7 9.6 H10.9 L11.5 9 H15 L15.6 9.6 H18.7 V11.1 H7.7 Z" fill="#fff"/><path fill-rule="evenodd" d="M8.8 11.6 H17.9 L17.4 19.2 A1.2 1.2 0 0 1 16.2 20.3 H10.5 A1.2 1.2 0 0 1 9.3 19.2 Z M10.9 13.2 V18.6 H11.6 V13.2 Z M13 13.2 V18.6 H13.7 V13.2 Z M15.1 13.2 V18.6 H15.8 V13.2 Z" fill="#fff" fill-opacity="0.45"/></svg></div>
<div class="ab" style="left:1715px;width:27px;top:666.00px"><svg width="27" height="30" viewBox="0 0 27 30"><path d="M7.6 8.2 H11.9 L15.5 11.8 V19 A1.3 1.3 0 0 1 14.2 20.3 H7.6 A1.3 1.3 0 0 1 6.3 19 V9.5 A1.3 1.3 0 0 1 7.6 8.2 Z" fill="#fff" fill-opacity="0.45"/><path d="M11.9 8.2 L15.5 11.8 H11.9 Z" fill="#fff"/><path d="M11 15.45 H19.3 M17.3 13.3 L19.5 15.45 L17.3 17.6" fill="none" stroke="#fff" stroke-width="1.3"/></svg></div>
<div class="row" style="top:716px;height:52px;background:#ffffff"></div>
<svg class="a" style="left:84.3px;top:729.70px" width="24" height="24" viewBox="0 0 24 24"><path fill="#6e6e6e" d="M8.59 16.59 13.17 12 8.59 7.41 10 6l6 6-6 6z"/></svg>
<div class="a t14" style="left:136.3px;top:726.00px">337 - Windows -<br>Audit Policy Disabled</div>
<svg class="a" style="left:354px;top:734.00px" width="28" height="16" viewBox="0 0 28 16"><rect x="0.5" y="0.5" width="27" height="15" rx="7.5" fill="#fff" stroke="#2a73b5" stroke-width="1"/><circle cx="8.4" cy="7.95" r="5.6" fill="#adb5bd"/></svg>
<div class="a t14" style="left:525.4px;top:734.00px">No</div>
<div class="a t14" style="left:695.9px;top:734.00px">0</div>
<div class="a t14" style="left:1353.3px;top:734.00px">No</div>
<div class="num" style="left:799px;width:133px;top:720.50px">90</div>
<div class="bar" style="left:799px;width:133px;top:741.00px"><div class="g" style="flex:30"></div><div class="o" style="flex:60"></div><div class="y" style="flex:30"></div></div>
<div class="num" style="left:964px;width:134px;top:720.50px">9</div>
<div class="bar" style="left:964px;width:134px;top:741.00px"><div class="g" style="flex:3"></div><div class="o" style="flex:6"></div><div class="y" style="flex:3"></div></div>
<div class="ab" style="left:1625px;width:26px;top:727.00px"><svg width="26" height="30" viewBox="0 0 26 30"><path d="M12.3 10.5 H9.7 A2 2 0 0 0 7.7 12.5 V17.7 A2 2 0 0 0 9.7 19.7 H14.7 A2 2 0 0 0 16.7 17.7 V15.3" fill="none" stroke="#fff" stroke-opacity="0.45" stroke-width="1.2"/><path d="M11.4 16.3 L18.2 9.5" stroke="#fff" stroke-width="2.6" stroke-linecap="round"/><path d="M10.5 15.4 L12.3 17.2 L10 17.7 Z" fill="#fff"/><path d="M16.3 10.3 L18.3 12.3" stroke="#2478c0" stroke-width="0.5"/></svg></div>
<div class="ab" style="left:1655px;width:26px;top:727.00px"><svg width="26" height="30" viewBox="0 0 26 30"><path d="M10.4 12.6 H9.1 A1.5 1.5 0 0 0 7.6 14.1 V18.1 A1.5 1.5 0 0 0 9.1 19.6 H13.1 A1.5 1.5 0 0 0 14.6 18.1 V17.4" fill="none" stroke="#fff" stroke-opacity="0.45" stroke-width="1.2"/><rect x="10.8" y="8.5" width="8.5" height="8.4" rx="1.4" fill="#fff"/></svg></div>
<div class="ab" style="left:1685px;width:27px;top:727.00px;background:#c0372f"><svg width="27" height="30" viewBox="0 0 27 30"><path d="M7.7 9.6 H10.9 L11.5 9 H15 L15.6 9.6 H18.7 V11.1 H7.7 Z" fill="#fff"/><path fill-rule="evenodd" d="M8.8 11.6 H17.9 L17.4 19.2 A1.2 1.2 0 0 1 16.2 20.3 H10.5 A1.2 1.2 0 0 1 9.3 19.2 Z M10.9 13.2 V18.6 H11.6 V13.2 Z M13 13.2 V18.6 H13.7 V13.2 Z M15.1 13.2 V18.6 H15.8 V13.2 Z" fill="#fff" fill-opacity="0.45"/></svg></div>
<div class="ab" style="left:1715px;width:27px;top:727.00px"><svg width="27" height="30" viewBox="0 0 27 30"><path d="M7.6 8.2 H11.9 L15.5 11.8 V19 A1.3 1.3 0 0 1 14.2 20.3 H7.6 A1.3 1.3 0 0 1 6.3 19 V9.5 A1.3 1.3 0 0 1 7.6 8.2 Z" fill="#fff" fill-opacity="0.45"/><path d="M11.9 8.2 L15.5 11.8 H11.9 Z" fill="#fff"/><path d="M11 15.45 H19.3 M17.3 13.3 L19.5 15.45 L17.3 17.6" fill="none" stroke="#fff" stroke-width="1.3"/></svg></div>
<div class="row" style="top:769px;height:68px;background:#fafafa"></div>
<svg class="a" style="left:84.3px;top:790.70px" width="24" height="24" viewBox="0 0 24 24"><path fill="#6e6e6e" d="M8.59 16.59 13.17 12 8.59 7.41 10 6l6 6-6 6z"/></svg>
<div class="a t14" style="left:136.3px;top:779.00px">336 - Windows -<br>Scheduled Task<br>Created</div>
<svg class="a" style="left:354px;top:795.00px" width="28" height="16" viewBox="0 0 28 16"><rect x="0.5" y="0.5" width="27" height="15" rx="7.5" fill="#fff" stroke="#2a73b5" stroke-width="1"/><circle cx="8.4" cy="7.95" r="5.6" fill="#adb5bd"/></svg>
<div class="a t14" style="left:525.4px;top:795.00px">No</div>
<div class="a t14" style="left:695.9px;top:795.00px">0</div>
<div class="a t14" style="left:1353.3px;top:795.00px">No</div>
<div class="num" style="left:799px;width:133px;top:781.50px">85</div>
<div class="bar" style="left:799px;width:133px;top:802.00px"><div class="g" style="flex:30"></div><div class="o" style="flex:60"></div><div class="y" style="flex:25"></div></div>
<div class="num" style="left:964px;width:134px;top:781.50px">8</div>
<div class="bar" style="left:964px;width:134px;top:802.00px"><div class="g" style="flex:3"></div><div class="o" style="flex:6"></div><div class="y" style="flex:2"></div></div>
<div class="ab" style="left:1625px;width:26px;top:788.00px"><svg width="26" height="30" viewBox="0 0 26 30"><path d="M12.3 10.5 H9.7 A2 2 0 0 0 7.7 12.5 V17.7 A2 2 0 0 0 9.7 19.7 H14.7 A2 2 0 0 0 16.7 17.7 V15.3" fill="none" stroke="#fff" stroke-opacity="0.45" stroke-width="1.2"/><path d="M11.4 16.3 L18.2 9.5" stroke="#fff" stroke-width="2.6" stroke-linecap="round"/><path d="M10.5 15.4 L12.3 17.2 L10 17.7 Z" fill="#fff"/><path d="M16.3 10.3 L18.3 12.3" stroke="#2478c0" stroke-width="0.5"/></svg></div>
<div class="ab" style="left:1655px;width:26px;top:788.00px"><svg width="26" height="30" viewBox="0 0 26 30"><path d="M10.4 12.6 H9.1 A1.5 1.5 0 0 0 7.6 14.1 V18.1 A1.5 1.5 0 0 0 9.1 19.6 H13.1 A1.5 1.5 0 0 0 14.6 18.1 V17.4" fill="none" stroke="#fff" stroke-opacity="0.45" stroke-width="1.2"/><rect x="10.8" y="8.5" width="8.5" height="8.4" rx="1.4" fill="#fff"/></svg></div>
<div class="ab" style="left:1685px;width:27px;top:788.00px;background:#c0372f"><svg width="27" height="30" viewBox="0 0 27 30"><path d="M7.7 9.6 H10.9 L11.5 9 H15 L15.6 9.6 H18.7 V11.1 H7.7 Z" fill="#fff"/><path fill-rule="evenodd" d="M8.8 11.6 H17.9 L17.4 19.2 A1.2 1.2 0 0 1 16.2 20.3 H10.5 A1.2 1.2 0 0 1 9.3 19.2 Z M10.9 13.2 V18.6 H11.6 V13.2 Z M13 13.2 V18.6 H13.7 V13.2 Z M15.1 13.2 V18.6 H15.8 V13.2 Z" fill="#fff" fill-opacity="0.45"/></svg></div>
<div class="ab" style="left:1715px;width:27px;top:788.00px"><svg width="27" height="30" viewBox="0 0 27 30"><path d="M7.6 8.2 H11.9 L15.5 11.8 V19 A1.3 1.3 0 0 1 14.2 20.3 H7.6 A1.3 1.3 0 0 1 6.3 19 V9.5 A1.3 1.3 0 0 1 7.6 8.2 Z" fill="#fff" fill-opacity="0.45"/><path d="M11.9 8.2 L15.5 11.8 H11.9 Z" fill="#fff"/><path d="M11 15.45 H19.3 M17.3 13.3 L19.5 15.45 L17.3 17.6" fill="none" stroke="#fff" stroke-width="1.3"/></svg></div>
<div class="bd" style="top:280px"></div>
<div class="bd" style="top:349px"></div>
<div class="bd" style="top:402px"></div>
<div class="bd" style="top:593px"></div>
<div class="bd" style="top:646px"></div>
<div class="bd" style="top:715px"></div>
<div class="bd" style="top:768px"></div>
<div class="a" style="left:1674px;top:845.7px;width:40px;height:40px;border-radius:50%;background:#dcdcdc"></div>
<div class="a" style="left:1768px;top:0;width:5px;height:849px;background:#f1f1f1"></div>
<div class="a" style="left:1768px;top:0;width:5px;height:812px;background:#2478c0;border-radius:0 0 3px 3px"></div>
</body></html>
